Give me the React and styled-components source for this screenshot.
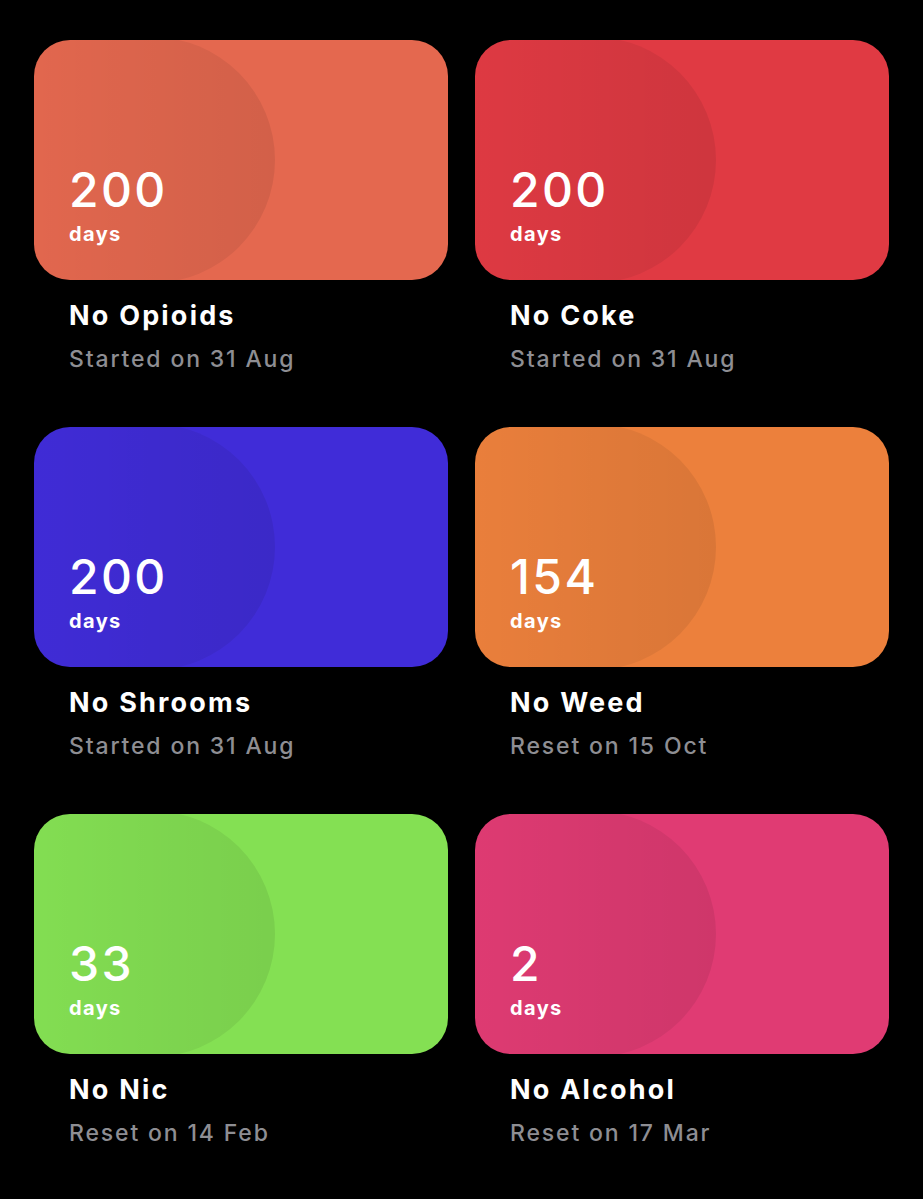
import React from 'react';
import styled, { createGlobalStyle } from 'styled-components';

const GlobalStyle = createGlobalStyle`
  html, body {
    margin: 0;
    padding: 0;
    background: #000;
  }
  body {
    font-family: Inter, "Noto Sans", "Liberation Sans", sans-serif;
    -webkit-font-smoothing: antialiased;
  }
`;

const Grid = styled.div`
  display: grid;
  grid-template-columns: 1fr 1fr;
  column-gap: 27px;
  row-gap: 54px;
  padding: 40px 34px;
  background: #000;
  min-height: 1199px;
  box-sizing: border-box;
  align-content: start;
`;

const Tile = styled.div`
  display: flex;
  flex-direction: column;
`;

const Card = styled.div`
  position: relative;
  height: 240px;
  border-radius: 36px;
  overflow: hidden;
  background: ${(p) => p.color};
  display: flex;
  flex-direction: column;
  justify-content: flex-end;
  padding: 0 35px 34px;
  box-sizing: border-box;
  color: #fff;
`;

// darker half-disc on the left of every card
const Blob = styled.div`
  position: absolute;
  left: 0;
  top: -3px;
  width: 241px;
  height: 246px;
  border-radius: 0 123px 123px 0;
  background: linear-gradient(90deg, rgba(0, 0, 0, 0.01) 0%, rgba(0, 0, 0, 0.05) 55%, rgba(0, 0, 0, 0.08) 100%);
`;

const Count = styled.div`
  position: relative;
  font-size: 48px;
  font-weight: 500;
  line-height: 48px;
  letter-spacing: 2.4px;
`;

const Unit = styled.div`
  position: relative;
  margin-top: 8px;
  font-size: 20px;
  font-weight: 700;
  line-height: 24px;
  letter-spacing: 1.4px;
`;

const Title = styled.div`
  margin: 20px 0 0 35px;
  font-size: 27px;
  font-weight: 700;
  line-height: 32px;
  letter-spacing: 2.2px;
  color: #fff;
`;

const Sub = styled.div`
  margin: 13px 0 0 35px;
  font-size: 23px;
  font-weight: 500;
  line-height: 28px;
  letter-spacing: 1.85px;
  color: #8e8e93;
`;

const items = [
  { count: 200, title: 'No Opioids', sub: 'Started on 31 Aug', color: '#e4684f' },
  { count: 200, title: 'No Coke', sub: 'Started on 31 Aug', color: '#e03a43' },
  { count: 200, title: 'No Shrooms', sub: 'Started on 31 Aug', color: '#402cd8' },
  { count: 154, title: 'No Weed', sub: 'Reset on 15 Oct', color: '#ec803c' },
  { count: 33, title: 'No Nic', sub: 'Reset on 14 Feb', color: '#84e053' },
  { count: 2, title: 'No Alcohol', sub: 'Reset on 17 Mar', color: '#e03b73' },
];

const App = () => (
  <>
    <GlobalStyle />
    <Grid>
      {items.map((item, i) => (
        <Tile key={i}>
          <Card color={item.color}>
            <Blob />
            <Count>{item.count}</Count>
            <Unit>days</Unit>
          </Card>
          <Title>{item.title}</Title>
          <Sub>{item.sub}</Sub>
        </Tile>
      ))}
    </Grid>
  </>
);

export default App;
